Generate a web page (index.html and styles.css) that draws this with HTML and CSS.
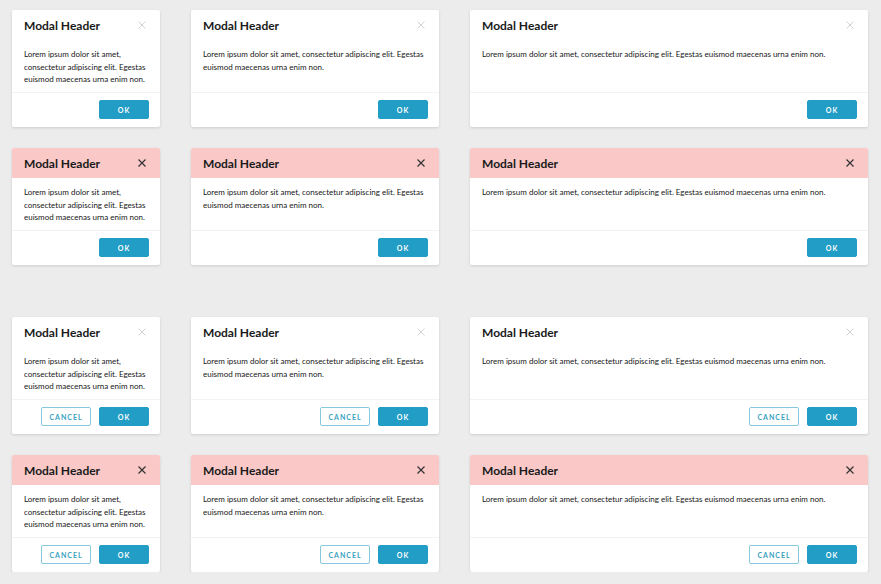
FILE: index.html
```html
<!DOCTYPE html>
<html lang="en">
<head>
<meta charset="utf-8">
<title>Modals</title>
<link rel="stylesheet" href="styles.css">
</head>
<body>
<main class="page">
  <section class="group">
    <div class="grid">
      <div class="modal"><div class="modal-header"><h2 class="title">Modal Header</h2><span class="close"><svg viewBox="0 0 8 8"><path d="M0.5 0.5L7.5 7.5M7.5 0.5L0.5 7.5"/></svg></span></div><div class="modal-body">Lorem ipsum dolor sit amet, consectetur adipiscing elit. Egestas euismod maecenas urna enim non.</div><div class="modal-footer"><button class="btn btn-primary">OK</button></div></div>
      <div class="modal"><div class="modal-header"><h2 class="title">Modal Header</h2><span class="close"><svg viewBox="0 0 8 8"><path d="M0.5 0.5L7.5 7.5M7.5 0.5L0.5 7.5"/></svg></span></div><div class="modal-body">Lorem ipsum dolor sit amet, consectetur adipiscing elit. Egestas euismod maecenas urna enim non.</div><div class="modal-footer"><button class="btn btn-primary">OK</button></div></div>
      <div class="modal"><div class="modal-header"><h2 class="title">Modal Header</h2><span class="close"><svg viewBox="0 0 8 8"><path d="M0.5 0.5L7.5 7.5M7.5 0.5L0.5 7.5"/></svg></span></div><div class="modal-body">Lorem ipsum dolor sit amet, consectetur adipiscing elit. Egestas euismod maecenas urna enim non.</div><div class="modal-footer"><button class="btn btn-primary">OK</button></div></div>

      <div class="modal modal-danger"><div class="modal-header"><h2 class="title">Modal Header</h2><span class="close"><svg viewBox="0 0 8 8"><path d="M0.5 0.5L7.5 7.5M7.5 0.5L0.5 7.5"/></svg></span></div><div class="modal-body">Lorem ipsum dolor sit amet, consectetur adipiscing elit. Egestas euismod maecenas urna enim non.</div><div class="modal-footer"><button class="btn btn-primary">OK</button></div></div>
      <div class="modal modal-danger"><div class="modal-header"><h2 class="title">Modal Header</h2><span class="close"><svg viewBox="0 0 8 8"><path d="M0.5 0.5L7.5 7.5M7.5 0.5L0.5 7.5"/></svg></span></div><div class="modal-body">Lorem ipsum dolor sit amet, consectetur adipiscing elit. Egestas euismod maecenas urna enim non.</div><div class="modal-footer"><button class="btn btn-primary">OK</button></div></div>
      <div class="modal modal-danger"><div class="modal-header"><h2 class="title">Modal Header</h2><span class="close"><svg viewBox="0 0 8 8"><path d="M0.5 0.5L7.5 7.5M7.5 0.5L0.5 7.5"/></svg></span></div><div class="modal-body">Lorem ipsum dolor sit amet, consectetur adipiscing elit. Egestas euismod maecenas urna enim non.</div><div class="modal-footer"><button class="btn btn-primary">OK</button></div></div>
    </div>
  </section>
  <section class="group">
    <div class="grid">
      <div class="modal"><div class="modal-header"><h2 class="title">Modal Header</h2><span class="close"><svg viewBox="0 0 8 8"><path d="M0.5 0.5L7.5 7.5M7.5 0.5L0.5 7.5"/></svg></span></div><div class="modal-body">Lorem ipsum dolor sit amet, consectetur adipiscing elit. Egestas euismod maecenas urna enim non.</div><div class="modal-footer"><button class="btn btn-secondary">CANCEL</button><button class="btn btn-primary">OK</button></div></div>
      <div class="modal"><div class="modal-header"><h2 class="title">Modal Header</h2><span class="close"><svg viewBox="0 0 8 8"><path d="M0.5 0.5L7.5 7.5M7.5 0.5L0.5 7.5"/></svg></span></div><div class="modal-body">Lorem ipsum dolor sit amet, consectetur adipiscing elit. Egestas euismod maecenas urna enim non.</div><div class="modal-footer"><button class="btn btn-secondary">CANCEL</button><button class="btn btn-primary">OK</button></div></div>
      <div class="modal"><div class="modal-header"><h2 class="title">Modal Header</h2><span class="close"><svg viewBox="0 0 8 8"><path d="M0.5 0.5L7.5 7.5M7.5 0.5L0.5 7.5"/></svg></span></div><div class="modal-body">Lorem ipsum dolor sit amet, consectetur adipiscing elit. Egestas euismod maecenas urna enim non.</div><div class="modal-footer"><button class="btn btn-secondary">CANCEL</button><button class="btn btn-primary">OK</button></div></div>

      <div class="modal modal-danger"><div class="modal-header"><h2 class="title">Modal Header</h2><span class="close"><svg viewBox="0 0 8 8"><path d="M0.5 0.5L7.5 7.5M7.5 0.5L0.5 7.5"/></svg></span></div><div class="modal-body">Lorem ipsum dolor sit amet, consectetur adipiscing elit. Egestas euismod maecenas urna enim non.</div><div class="modal-footer"><button class="btn btn-secondary">CANCEL</button><button class="btn btn-primary">OK</button></div></div>
      <div class="modal modal-danger"><div class="modal-header"><h2 class="title">Modal Header</h2><span class="close"><svg viewBox="0 0 8 8"><path d="M0.5 0.5L7.5 7.5M7.5 0.5L0.5 7.5"/></svg></span></div><div class="modal-body">Lorem ipsum dolor sit amet, consectetur adipiscing elit. Egestas euismod maecenas urna enim non.</div><div class="modal-footer"><button class="btn btn-secondary">CANCEL</button><button class="btn btn-primary">OK</button></div></div>
      <div class="modal modal-danger"><div class="modal-header"><h2 class="title">Modal Header</h2><span class="close"><svg viewBox="0 0 8 8"><path d="M0.5 0.5L7.5 7.5M7.5 0.5L0.5 7.5"/></svg></span></div><div class="modal-body">Lorem ipsum dolor sit amet, consectetur adipiscing elit. Egestas euismod maecenas urna enim non.</div><div class="modal-footer"><button class="btn btn-secondary">CANCEL</button><button class="btn btn-primary">OK</button></div></div>
    </div>
  </section>
</main>
</body>
</html>
```

FILE: styles.css
```css
* { box-sizing: border-box; }

html, body {
  margin: 0;
  background: #ececec;
}

body {
  font-family: "Lato", "Liberation Sans", sans-serif;
  color: #1f1f1f;
}

.page {
  padding: 10px 13px 0 12px;
  display: flex;
  flex-direction: column;
  gap: 52px;
}

.grid {
  display: grid;
  grid-template-columns: 148px 248px 398px;
  column-gap: 31px;
  row-gap: 21px;
}

.modal {
  background: #fff;
  border-radius: 2px;
  box-shadow: 0 1px 3px rgba(0, 0, 0, 0.13);
  display: flex;
  flex-direction: column;
  overflow: hidden;
}

.modal-header {
  height: 30px;
  display: flex;
  align-items: center;
  justify-content: space-between;
  padding: 0 14px 0 12px;
}

.modal-danger .modal-header {
  background: #f9c8c7;
}

.title {
  margin: 0;
  font-size: 12px;
  font-weight: 700;
  color: #1a1a1a;
}

.close {
  width: 8px;
  height: 8px;
  display: flex;
}

.close svg {
  width: 8px;
  height: 8px;
  fill: none;
  stroke: #d2d2d2;
  stroke-width: 1;
}

.modal-danger .close svg {
  stroke: #333;
  stroke-width: 1.2;
}

.modal-body {
  height: 52px;
  padding: 8px 12px 0;
  font-size: 8px;
  line-height: 12.6px;
  color: #161616;
}

.modal-footer {
  border-top: 1px solid #f3f3f3;
  padding: 7px 11px 8px;
  display: flex;
  justify-content: flex-end;
  gap: 8px;
}

.btn {
  width: 50px;
  height: 19px;
  margin: 0;
  padding: 0;
  border-radius: 2px;
  font-family: "Lato", "Liberation Sans", sans-serif;
  font-size: 7px;
  font-weight: 700;
  letter-spacing: 1px;
  display: flex;
  align-items: center;
  justify-content: center;
}

.btn-primary {
  background: #229dc6;
  border: 1px solid #229dc6;
  color: #fff;
}

.btn-secondary {
  background: #fff;
  border: 1px solid #86c8dd;
  color: #3a9fc1;
}
```
